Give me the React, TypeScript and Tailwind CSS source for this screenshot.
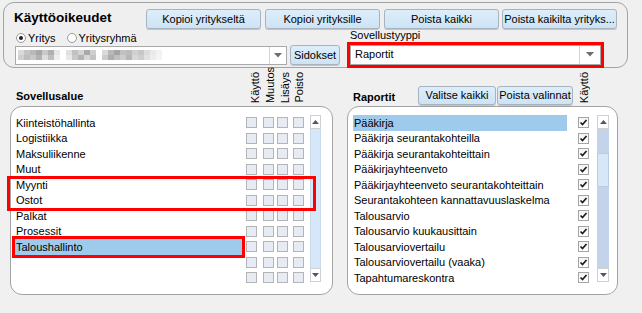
import React from "react";

const areas = [
  "Kiinteistöhallinta",
  "Logistiikka",
  "Maksuliikenne",
  "Muut",
  "Myynti",
  "Ostot",
  "Palkat",
  "Prosessit",
  "Taloushallinto",
  "",
  "",
];

const reports = [
  "Pääkirja",
  "Pääkirja seurantakohteilla",
  "Pääkirja seurantakohteittain",
  "Pääkirjayhteenveto",
  "Pääkirjayhteenveto seurantakohteittain",
  "Seurantakohteen kannattavuuslaskelma",
  "Talousarvio",
  "Talousarvio kuukausittain",
  "Talousarviovertailu",
  "Talousarviovertailu (vaaka)",
  "Tapahtumareskontra",
];

// pixelated (anonymised) company name
const blurTop = ["#d9d9d9", "#c4c4c4", "#b9b9b9", "#a8a8a8", "#c9c9c9", "#b0b0b0", "#e6e6e6", "#ffffff", "#e0e0e0", "#c2c2c2", "#d4d4d4", "#a9a9a9", "#cfcfcf", "#ffffff", "#dadada", "#b8b8b8", "#a4a4a4", "#c1c1c1", "#bcbcbc", "#d0d0d0", "#c7c7c7", "#dcdcdc", "#e9e9e9", "#f2f2f2"];
const blurBot = ["#cfcfcf", "#bdbdbd", "#c8c8c8", "#b2b2b2", "#dddddd", "#bfbfbf", "#eeeeee", "#ffffff", "#e8e8e8", "#c9c9c9", "#b4b4b4", "#d7d7d7", "#c3c3c3", "#ffffff", "#cbcbcb", "#adadad", "#c0c0c0", "#cdcdcd", "#b7b7b7", "#d8d8d8", "#cecece", "#e2e2e2", "#ededed", "#f4f4f4"];

function Btn({ children, className = "" }: { children: React.ReactNode; className?: string }) {
  return (
    <button className={"flex items-center justify-center rounded-[3px] border border-[#a7b3bf] bg-gradient-to-b from-[#ddeefb] to-[#cde3f5] text-[11px] leading-none text-black shadow-[0_1px_0_#c4c4c4] " + className}>
      {children}
    </button>
  );
}

function DownArrow() {
  return (
    <svg width="8" height="5" viewBox="0 0 8 5">
      <path d="M0 0 L8 0 L4 4.5 Z" fill="#6b6f75" />
    </svg>
  );
}

function Radio({ checked, label }: { checked?: boolean; label: string }) {
  return (
    <div className="flex items-center gap-[2px]">
      <div className="flex h-[10px] w-[10px] items-center justify-center rounded-full border border-[#9a9a9a] bg-white">
        {checked && <div className="h-[4px] w-[4px] rounded-full bg-[#222]" />}
      </div>
      <span>{label}</span>
    </div>
  );
}

function Box({ checked }: { checked?: boolean }) {
  if (checked) {
    return (
      <div className="flex h-[11px] w-[11px] items-center justify-center border border-[#a4a4a4] bg-gradient-to-b from-[#f4f4f4] to-[#ffffff]">
        <svg width="9" height="9" viewBox="0 0 9 9">
          <path d="M1.5 4.5 L3.5 6.5 L7.5 2" stroke="#1c1c1c" strokeWidth="1.7" fill="none" />
        </svg>
      </div>
    );
  }
  return <div className="h-[11px] w-[11px] border border-[#b4b4b4] bg-[#e7ebf3]" />;
}

function ScrollBar({ full }: { full?: boolean }) {
  return (
    <div className="flex h-[167px] flex-col">
      <div className="flex h-[14px] items-center justify-center border border-[#d0d0d0] bg-white">
        <svg width="7" height="4" viewBox="0 0 7 4">
          <path d="M0 4 L7 4 L3.5 0 Z" fill="#4b5a72" />
        </svg>
      </div>
      {full ? (
        <div className="flex-1 border-x border-[#c9dcee] bg-[#d5e7f8]" />
      ) : (
        <div className="flex flex-1 flex-col bg-[#c3d3e9]">
          <div className="h-[24px]" />
          <div className="h-[34px] border border-[#b9cde2] bg-[#d6e8f8]" />
        </div>
      )}
      <div className="flex h-[14px] items-center justify-center border border-[#d0d0d0] bg-white">
        <svg width="7" height="4" viewBox="0 0 7 4">
          <path d="M0 0 L7 0 L3.5 4 Z" fill="#4b5a72" />
        </svg>
      </div>
    </div>
  );
}

function VLabel({ children }: { children: React.ReactNode }) {
  return <span className="rotate-180 text-[11px] leading-[12px] [writing-mode:vertical-rl]">{children}</span>;
}

export default function App() {
  return (
    <div className="relative h-[313px] w-[642px] overflow-hidden bg-[#f0f0f0] pt-[2px] font-['Liberation_Sans',Arial,sans-serif] text-[11px] text-black">
      {/* Header panel */}
      <div className="ml-[3px] h-[66px] w-[625px] rounded-[11px] border border-[#a3a3a3] bg-[#efefef] px-[10px] pt-[5px]">
        <div className="flex h-[22px]">
          <div className="mt-[2px] w-[133px] text-[13.5px] font-bold leading-[16px]">Käyttöoikeudet</div>
          <div className="mt-[1px] flex">
            <Btn className="h-[20px] w-[115px]">Kopioi yritykseltä</Btn>
            <Btn className="ml-[4px] h-[20px] w-[115px]">Kopioi yrityksille</Btn>
            <Btn className="ml-[4px] h-[20px] w-[115px]">Poista kaikki</Btn>
            <Btn className="ml-[3px] h-[20px] w-[115px]">Poista kaikilta yrityks...</Btn>
          </div>
        </div>
        <div className="flex h-[14px] items-center">
          <div className="ml-[2px] flex w-[334px] items-center gap-[11px] pt-[2px]">
            <Radio checked label="Yritys" />
            <Radio label="Yritysryhmä" />
          </div>
          <span className="-mt-[4px] leading-[12px]">Sovellustyyppi</span>
        </div>
        <div className="mt-[1px] flex h-[20px] items-center">
          <div className="ml-[1px] flex h-[19px] w-[272px] border border-[#a9a9a9] bg-white">
            <div className="flex flex-1 flex-col justify-center pl-[2px]">
              <div className="flex">
                {blurTop.map((c, i) => (
                  <div key={i} className="h-[5px] w-[6px]" style={{ background: c }} />
                ))}
              </div>
              <div className="flex">
                {blurBot.map((c, i) => (
                  <div key={i} className="h-[5px] w-[6px]" style={{ background: c }} />
                ))}
              </div>
            </div>
            <div className="flex w-[17px] items-center justify-center border-l border-[#d4d4d4]">
              <DownArrow />
            </div>
          </div>
          <Btn className="ml-[3px] h-[20px] w-[50px]">Sidokset</Btn>
          <div className="ml-[10px] -mt-[1px] flex h-[20px] w-[251px] border border-[#a9a9a9] bg-white outline-[3px] outline-[#ff0000] outline-solid">
            <div className="flex flex-1 items-center pl-[4px] text-[11px]">Raportit</div>
            <div className="flex w-[21px] items-center justify-center border-l border-[#d4d4d4]">
              <DownArrow />
            </div>
          </div>
        </div>
      </div>

      {/* Lower area */}
      <div className="flex">
        {/* Sovellusalue */}
        <div className="ml-[10px] w-[323px]">
          <div className="flex h-[38px] items-end">
            <div className="w-[236px] pb-[4px] pl-[6px] font-bold leading-[12px]">Sovellusalue</div>
            <div className="flex w-[17px] justify-center pb-[3px]"><VLabel>Käyttö</VLabel></div>
            <div className="flex w-[14px] justify-center pb-[3px]"><VLabel>Muutos</VLabel></div>
            <div className="flex w-[16px] justify-center pb-[3px]"><VLabel>Lisäys</VLabel></div>
            <div className="flex w-[12px] justify-center pb-[3px]"><VLabel>Poisto</VLabel></div>
          </div>
          <div className="flex h-[189px] rounded-[12px] border border-[#a3a3a3] bg-white pl-[4px] pt-[8px]">
            <div className="flex flex-col">
              {areas.map((a, i) => (
                <div key={i} className="flex h-[15.5px] items-center">
                  <div className={"flex h-full w-[227px] items-center pl-[1px] " + (a === "Taloushallinto" ? "bg-[#9ecbec] outline-[3px] outline-[#ff0000] outline-solid" : "")}>
                    {a}
                  </div>
                  <div className="ml-[4px]"><Box /></div>
                  <div className="ml-[6px]"><Box /></div>
                  <div className="ml-[3px]"><Box /></div>
                  <div className="ml-[5px]"><Box /></div>
                </div>
              ))}
            </div>
            <div className="ml-[6px] w-[11px]">
              <ScrollBar full />
            </div>
          </div>
        </div>

        {/* Raportit */}
        <div className="ml-[14px] w-[271px]">
          <div className="flex h-[38px] items-end">
            <div className="w-[71px] pb-[3px] pl-[6px] font-bold leading-[12px]">Raportit</div>
            <div className="mb-[1px] flex">
              <Btn className="h-[19px] w-[78px]">Valitse kaikki</Btn>
              <Btn className="ml-[1px] h-[19px] w-[76px]">Poista valinnat</Btn>
            </div>
            <div className="ml-[5px] flex w-[11px] justify-center pb-[3px]"><VLabel>Käyttö</VLabel></div>
          </div>
          <div className="flex h-[189px] rounded-[12px] border border-[#a3a3a3] bg-white pl-[5px] pt-[8px]">
            <div className="flex flex-col">
              {reports.map((r, i) => (
                <div key={i} className="flex h-[15.5px] items-center">
                  <div className={"flex h-full w-[214px] items-center pl-[1px] " + (i === 0 ? "bg-[#9ecbec]" : "")}>{r}</div>
                  <div className="ml-[11px]"><Box checked /></div>
                </div>
              ))}
            </div>
            <div className="ml-[8px] w-[12px]">
              <ScrollBar />
            </div>
          </div>
        </div>
      </div>

      {/* highlight marker around Myynti / Ostot */}
      <div className="absolute left-[7px] top-[176px] h-[35px] w-[309px] border-[3px] border-[#ff0000]" />
    </div>
  );
}
